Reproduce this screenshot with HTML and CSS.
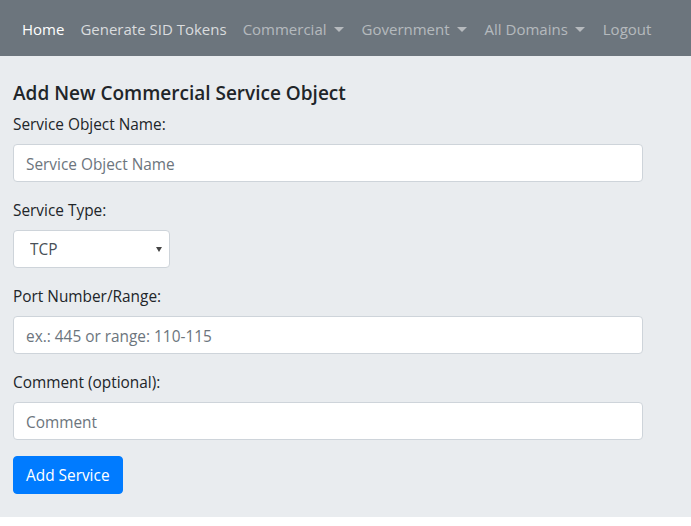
FILE: index.html
```html
<!DOCTYPE html>
<html>
<head>
<meta charset="utf-8">
<link rel="stylesheet" href="styles.css">
<title>Add Service</title>
</head>
<body>
<nav class="navbar">
  <ul class="nav">
    <li><a class="nav-link active" href="#">Home</a></li>
    <li><a class="nav-link light" href="#">Generate SID Tokens</a></li>
    <li><a class="nav-link dropdown" href="#">Commercial</a></li>
    <li><a class="nav-link dropdown" href="#">Government</a></li>
    <li><a class="nav-link dropdown" href="#">All Domains</a></li>
    <li><a class="nav-link" href="#">Logout</a></li>
  </ul>
</nav>
<main class="page">
  <form class="form">
    <h5 class="title">Add New Commercial Service Object</h5>
    <div class="group">
      <label class="label" for="name">Service Object Name:</label>
      <input class="control" id="name" type="text" placeholder="Service Object Name">
    </div>
    <div class="group">
      <label class="label" for="type">Service Type:</label>
      <div class="select-wrap">
        <select class="control select" id="type">
          <option>TCP</option>
          <option>UDP</option>
        </select>
      </div>
    </div>
    <div class="group">
      <label class="label" for="port">Port Number/Range:</label>
      <input class="control" id="port" type="text" placeholder="ex.: 445 or range: 110-115">
    </div>
    <div class="group">
      <label class="label" for="comment">Comment (optional):</label>
      <input class="control" id="comment" type="text" placeholder="Comment">
    </div>
    <button class="btn" type="button">Add Service</button>
  </form>
</main>
</body>
</html>
```
FILE: styles.css
```css
* { box-sizing: border-box; }
html, body { margin: 0; padding: 0; }
body {
  font-family: "Open Sans", "Noto Sans", "Liberation Sans", sans-serif;
  font-size: 15.4px;
  line-height: 1.5;
  color: #212529;
  background: #fff;
}
.navbar {
  background: #6c757d;
  height: 56px;
  padding: 8px 14px;
  display: flex;
  align-items: center;
}
.nav {
  list-style: none;
  margin: 0;
  padding: 0;
  display: flex;
  flex-shrink: 0;
}
.nav-link {
  display: block;
  padding: 9px 8px 7px;
  font-size: 15px;
  line-height: 24px;
  white-space: nowrap;
  text-decoration: none;
  color: rgba(255, 255, 255, 0.5);
}
.nav-link.active { color: #fff; }
.nav-link.light { color: rgba(255, 255, 255, 0.75); }
.nav-link.dropdown { padding-right: 10px; }
.nav-link.dropdown::after {
  content: "";
  display: inline-block;
  margin-left: 7px;
  vertical-align: 3px;
  border-top: 5px solid;
  border-left: 5px solid transparent;
  border-right: 5px solid transparent;
}
.page {
  background: #e9ecef;
  padding: 24px 48px 23px 13px;
}
.title {
  margin: 0 0 8px;
  padding-top: 1px;
  height: 24px;
  font-size: 19px;
  font-weight: 600;
  line-height: 24px;
}
.group { margin-bottom: 16px; }
.label {
  display: block;
  margin-bottom: 8px;
  padding-top: 1px;
  height: 24px;
  line-height: 24px;
}
.control {
  display: block;
  width: 100%;
  height: 38px;
  padding: 7px 12px 5px;
  font: inherit;
  line-height: 24px;
  color: #495057;
  background: #fff;
  border: 1px solid #ced4da;
  border-radius: 4px;
}
.control::placeholder { color: #6c757d; opacity: 1; }
.select-wrap {
  position: relative;
  width: 157px;
}
.select {
  -webkit-appearance: none;
  appearance: none;
  padding-left: 16px;
  color: #495057;
}
.select-wrap::after {
  content: "";
  position: absolute;
  right: 8px;
  top: 17px;
  border-top: 5px solid #444;
  border-left: 3px solid transparent;
  border-right: 3px solid transparent;
  pointer-events: none;
}
.btn {
  display: inline-block;
  height: 38px;
  padding: 7px 12px 5px;
  font: inherit;
  line-height: 24px;
  color: #fff;
  background: #007bff;
  border: 1px solid #007bff;
  border-radius: 4px;
}
```
